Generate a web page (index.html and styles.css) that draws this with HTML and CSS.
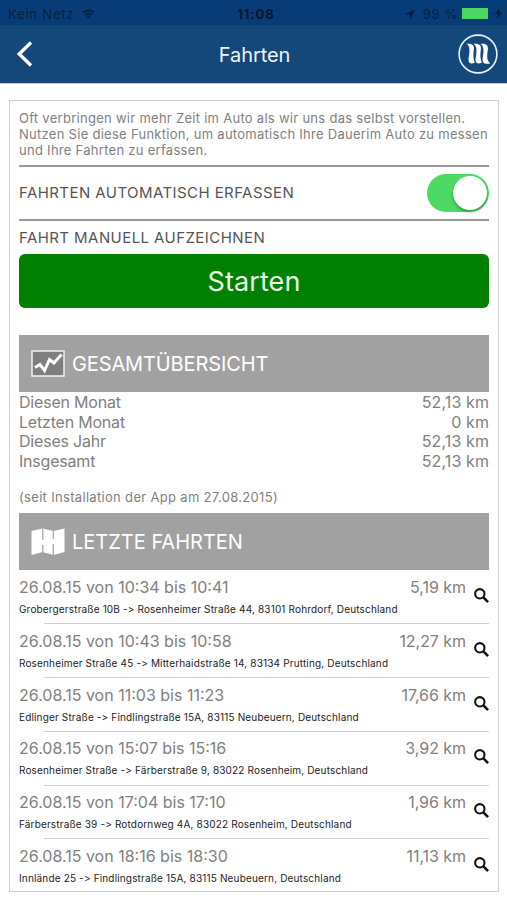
FILE: index.html
```html
<!DOCTYPE html>
<html lang="de">

<head>
    <meta charset="UTF-8">
    <meta name="viewport" content="width=device-width, initial-scale=1.0">
    <title>Fahrten</title>

    <link rel="stylesheet" href="styles.css">
</head>

<body>
    <!-- shared icons -->
    <svg class="defs">
        <symbol id="search" viewBox="0 0 16 16">
            <circle cx="6.2" cy="6.2" r="5" fill="none" stroke="#111" stroke-width="2.2"/>
            <path d="M9.8 9.8L15 15" stroke="#111" stroke-width="2.8"/>
        </symbol>
    </svg>

    <div class="statusbar">
        <div class="network">
            <span class="carrier">Kein Netz</span>
            <svg class="wifi" width="13" height="10" viewBox="0 0 14 11" fill="none" stroke="#06203f" stroke-width="2.1">
                <path d="M1 4Q7 -1.2 13 4"/>
                <path d="M3.4 6.5Q7 3.4 10.6 6.5"/>
                <path d="M7 10.5L4.9 8.3Q7 6.7 9.1 8.3z" fill="#06203f" stroke="none"/>
            </svg>
        </div>
        <span class="clock">11:08</span>
        <div class="power">
            <svg width="10" height="10" viewBox="0 0 10 10"><path d="M0 5.4L9.6 0.4L5.6 9.8L5 5.2z" fill="#041a35"/></svg>
            <span class="percent">99 %</span>
            <svg class="battery" width="29" height="11" viewBox="0 0 29 11">
                <rect width="26" height="11" fill="#4bd763"/>
                <path d="M27 3.5q2 2 0 4z" fill="#06203f"/>
            </svg>
            <svg width="7" height="11" viewBox="0 0 7 11"><path d="M4.6 0L0.2 6H3L1.8 11L6.8 4.6H3.9z" fill="#041a35"/></svg>
        </div>
    </div>

    <div class="navbar">
        <svg class="back" width="18" height="28" viewBox="0 0 18 28"><path d="M15 2.5L3.2 14L15 25.5" fill="none" stroke="#fff" stroke-width="3.3"/></svg>
        <h1 class="title">Fahrten</h1>
        <svg class="logo" width="40" height="40" viewBox="0 0 40 40">
            <circle cx="20" cy="20" r="18.9" fill="none" stroke="#e6f1fc" stroke-width="1.6"/>
            <g fill="#fff">
                <path id="wave" d="M8.4 9.8C14 9 16.7 11 15.8 16C15.2 20 15 24 16.8 28.7C12 30.6 9.6 28.8 10.8 23C11.8 18 12.2 11.8 8.4 9.8z"/>
                <use href="#wave" x="7"/>
                <path d="M22.4 9.8C28 9 30.7 11 29.8 16C29 21 28.4 27 32.4 29.3C26.5 31 23.6 28.8 24.8 23C25.8 18 26.2 11.8 22.4 9.8z"/>
            </g>
        </svg>
    </div>

    <div class="box">
        <p class="intro">Oft verbringen wir mehr Zeit im Auto als wir uns das selbst vorstellen.<br>
            Nutzen Sie diese Funktion, um automatisch Ihre Dauerim Auto zu messen<br>
            und Ihre Fahrten zu erfassen.</p>

        <div class="auto">
            <span class="label auto-label">FAHRTEN AUTOMATISCH ERFASSEN</span>
            <span class="switch"><span class="knob"></span></span>
        </div>
        <div class="label manual-label">FAHRT MANUELL AUFZEICHNEN</div>
        <button class="start">Starten</button>

        <h2 class="head">
            <svg width="34" height="27" viewBox="0 0 34 27">
                <rect x="1" y="1" width="32" height="25" fill="#7f7f7f" stroke="#ededed" stroke-width="1.6"/>
                <path d="M4 17.5L9 14.5L13.5 20.5L18.5 9.5L23 13L30.5 4.5" fill="none" stroke="#fff" stroke-width="3"/>
            </svg>
            <span class="overview">GESAMTÜBERSICHT</span>
        </h2>
        <div class="stats">
            <div class="stat"><span>Diesen Monat</span><span class="sum">52,13 km</span></div>
            <div class="stat"><span>Letzten Monat</span><span class="sum">0 km</span></div>
            <div class="stat"><span>Dieses Jahr</span><span class="sum">52,13 km</span></div>
            <div class="stat"><span>Insgesamt</span><span class="sum">52,13 km</span></div>
        </div>
        <p class="since">(seit Installation der App am 27.08.2015)</p>

        <h2 class="head">
            <svg width="34" height="27" viewBox="0 0 34 27">
                <path d="M0.5 3L11.5 0.5L22.5 3L33.5 0.5V24L22.5 27L11.5 24L0.5 27z" fill="#fff"/>
                <path d="M11.8 0.5V12M11.8 17V24.5M22.3 3V11M22.3 16V27" stroke="#a8a8a8" stroke-width="1.3"/>
            </svg>
            <span class="last">LETZTE FAHRTEN</span>
        </h2>
        <div class="trips">
            <div class="trip">
                <div class="when"><span>26.08.15 von 10:34 bis 10:41</span><span class="km">5,19 km</span></div>
                <div class="route">Grobergerstraße 10B -&gt; Rosenheimer Straße 44, 83101 Rohrdorf, Deutschland</div>
                <svg class="search"><use href="#search"/></svg>
            </div>
            <div class="trip">
                <div class="when"><span>26.08.15 von 10:43 bis 10:58</span><span class="km">12,27 km</span></div>
                <div class="route">Rosenheimer Straße 45 -&gt; Mitterhaidstraße 14, 83134 Prutting, Deutschland</div>
                <svg class="search"><use href="#search"/></svg>
            </div>
            <div class="trip">
                <div class="when"><span>26.08.15 von 11:03 bis 11:23</span><span class="km">17,66 km</span></div>
                <div class="route">Edlinger Straße -&gt; Findlingstraße 15A, 83115 Neubeuern, Deutschland</div>
                <svg class="search"><use href="#search"/></svg>
            </div>
            <div class="trip">
                <div class="when"><span>26.08.15 von 15:07 bis 15:16</span><span class="km">3,92 km</span></div>
                <div class="route">Rosenheimer Straße -&gt; Färberstraße 9, 83022 Rosenheim, Deutschland</div>
                <svg class="search"><use href="#search"/></svg>
            </div>
            <div class="trip">
                <div class="when"><span>26.08.15 von 17:04 bis 17:10</span><span class="km">1,96 km</span></div>
                <div class="route">Färberstraße 39 -&gt; Rotdornweg 4A, 83022 Rosenheim, Deutschland</div>
                <svg class="search"><use href="#search"/></svg>
            </div>
            <div class="trip">
                <div class="when"><span>26.08.15 von 18:16 bis 18:30</span><span class="km">11,13 km</span></div>
                <div class="route">Innlände 25 -&gt; Findlingstraße 15A, 83115 Neubeuern, Deutschland</div>
                <svg class="search"><use href="#search"/></svg>
            </div>
        </div>
    </div>
</body>

</html>
```
FILE: styles.css
```css
* {
    box-sizing: border-box;
}

body {
    margin: 0;
    height: 900px;
    overflow: hidden;
    background-color: #fff;
    font-family: Inter, "Liberation Sans", sans-serif;
    color: #808080;
    white-space: nowrap;
}

.defs {
    display: none;
}

svg {
    flex: none;
}

/* status bar */
.statusbar {
    display: grid;
    grid-template-columns: 1fr auto 1fr;
    align-items: center;
    height: 25px;
    padding: 2px 5px 0 8px;
    background-color: #083c78;
    color: #06203f;
    font-size: 13px;
}

.network {
    display: flex;
    align-items: center;
    gap: 8px;
}

.carrier {
    letter-spacing: 0.8px;
}

.clock {
    margin-left: 2px;
    font-weight: bold;
    letter-spacing: 0.9px;
    color: #04162e;
}

.power {
    display: flex;
    align-items: center;
    justify-content: flex-end;
    gap: 4px;
}

.percent {
    margin-left: 4px;
    letter-spacing: 0.7px;
}

/* navigation */
.navbar {
    display: grid;
    grid-template-columns: 1fr auto 1fr;
    align-items: center;
    height: 59px;
    padding: 0 9px 0 16px;
    background-color: #14487a;
    border-bottom: 1px solid #b4cbe0;
}

.title {
    margin: 2px 5px 0 0;
    font-size: 20px;
    font-weight: normal;
    letter-spacing: -0.1px;
    color: #eef5fc;
}

.logo {
    justify-self: end;
}

/* content */
.box {
    height: 792px;
    margin: 16px 8px 0 9px;
    padding: 9px 9px 0 9px;
    border: 1.5px solid #d0d0d0;
}

.intro {
    margin: 0;
    height: 57px;
    border-bottom: 2px solid #999;
    font-size: 13px;
    line-height: 16px;
    letter-spacing: 0.28px;
}

.label {
    font-size: 15px;
    letter-spacing: 0.43px;
    color: #555;
}

.auto {
    display: flex;
    align-items: center;
    justify-content: space-between;
    height: 54px;
    border-bottom: 2px solid #999;
}

.auto-label {
    padding-bottom: 2px;
}

.switch {
    display: flex;
    justify-content: flex-end;
    width: 62px;
    height: 38px;
    padding: 2px;
    border-radius: 19px;
    background-color: #4cd964;
}

.knob {
    width: 34px;
    height: 34px;
    border-radius: 50%;
    background-color: #fff;
    box-shadow: 0 2px 3px rgba(0, 0, 0, 0.3);
}

.manual-label {
    height: 33px;
    line-height: 33px;
}

.start {
    display: block;
    width: 100%;
    height: 54px;
    border: none;
    border-radius: 6px;
    background-color: #008000;
    color: #e9fbe9;
    font-family: inherit;
    font-size: 27px;
    letter-spacing: 0.1px;
}

.head {
    display: flex;
    align-items: center;
    gap: 7px;
    height: 57px;
    margin: 27px 0 0;
    padding-left: 12px;
    background-color: #a1a1a1;
    color: #fff;
    font-size: 20px;
    font-weight: normal;
}

.overview {
    letter-spacing: -0.12px;
}

.stat {
    display: flex;
    justify-content: space-between;
    height: 19.6px;
    line-height: 20px;
    font-size: 16px;
    letter-spacing: -0.2px;
}

.sum {
    letter-spacing: 0.1px;
}

.since {
    margin: 19px 0 0;
    height: 16px;
    line-height: 16px;
    font-size: 13px;
    letter-spacing: 0.32px;
}

.since + .head {
    margin-top: 8px;
}

.trip {
    display: grid;
    grid-template-columns: 1fr 15px;
    column-gap: 8px;
    height: 53.8px;
    padding-top: 6.6px;
    /* separator starts indented */
    background: linear-gradient(#cfcfcf, #cfcfcf) 25px 100% / 100% 1px no-repeat;
}

.trip:last-child {
    background: none;
}

.when {
    display: flex;
    justify-content: space-between;
    height: 21px;
    line-height: 21px;
    font-size: 16px;
}

.km {
    letter-spacing: -0.05px;
}

.route {
    grid-row: 2;
    height: 24px;
    line-height: 21px;
    font-size: 10px;
    letter-spacing: 0.16px;
    /* keep "->" as two characters */
    font-feature-settings: "calt" 0;
    color: #222;
}

.search {
    grid-row: 1 / 3;
    grid-column: 2;
    width: 15px;
    height: 15px;
    margin-top: 11px;
}
```
